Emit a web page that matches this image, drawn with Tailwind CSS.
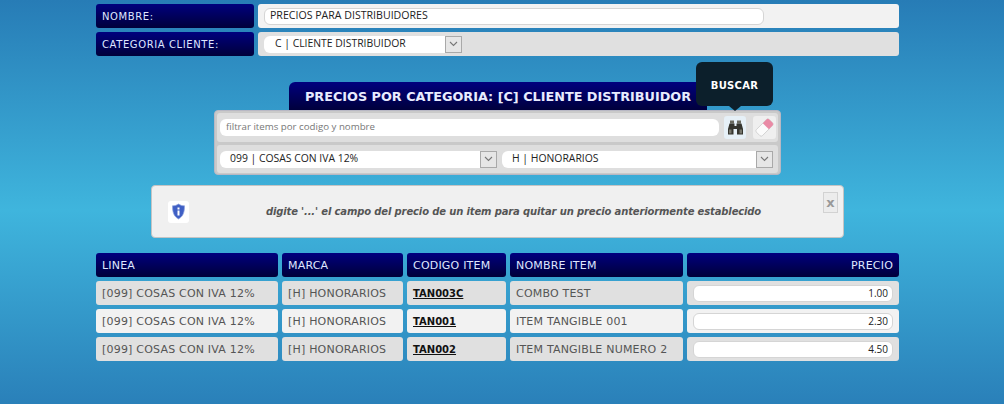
<!DOCTYPE html>
<html lang="es">
<head>
  <meta charset="UTF-8" />
  <title>Precios por categoria</title>
  <script src="https://cdn.jsdelivr.net/npm/@tailwindcss/browser@4"></script>
</head>
<body class="h-[404px] w-[1004px] overflow-hidden bg-[linear-gradient(180deg,#277cb6_0%,#3fb5dd_52%,#2a80b9_100%)] font-['DejaVu_Sans',sans-serif]">
  <div class="ml-[96px] flex w-[803px] flex-col pt-1">

    <!-- CABECERA -->
    <div class="grid grid-cols-[158px_641px] gap-1">
      <div class="flex h-6 items-center rounded-[3px] bg-[linear-gradient(180deg,#00007e,#00003a)] pl-1.5 text-[10px] tracking-[0.6px] text-[#dfe6ff]">NOMBRE:</div>
      <div class="flex h-6 items-center rounded-[3px] bg-[#f2f2f2] pl-[6px]">
        <div class="flex h-[17px] w-[500px] items-center rounded-md border border-[#d5d5d5] bg-white pl-[5px] font-['Open_Sans',sans-serif] text-[10.6px] text-[#222]">PRECIOS PARA DISTRIBUIDORES</div>
      </div>
      <div class="flex h-6 items-center rounded-[3px] bg-[linear-gradient(180deg,#00007e,#00003a)] pl-1.5 text-[10px] tracking-[0.6px] text-[#dfe6ff]">CATEGORIA CLIENTE:</div>
      <div class="flex h-6 items-center rounded-[3px] bg-[#e0e0e0] pl-[6px]">
        <div class="flex h-[17px] w-[198px] items-center justify-between rounded-l-md bg-white pl-[11px] font-['Open_Sans',sans-serif] text-[10.4px] text-[#222]">
          <span>C | CLIENTE DISTRIBUIDOR</span>
          <span class="flex h-[17px] w-[17px] items-center justify-center border border-[#a9a9a9] bg-[#e6e6e6]">
            <svg width="9" height="6" viewBox="0 0 9 6"><path d="M1 1l3.500 3.500L8 1" fill="none" stroke="#777" stroke-width="1.1"/></svg>
          </span>
        </div>
      </div>
    </div>

    <!-- BUSCADOR -->
    <div class="relative ml-[118px] mt-[26px] w-[567px]">
      <div class="ml-[75px] flex h-[29px] w-[418px] items-center justify-center rounded-t-md bg-[linear-gradient(180deg,#00007e,#00003a)] text-[12.8px] font-bold text-[#e8ecff]">PRECIOS POR CATEGORIA: [C] CLIENTE DISTRIBUIDOR</div>

      <div class="-mt-px flex flex-col gap-[3px] rounded-[4px] border border-[#b8b8c4] bg-[#c9c9c9] px-0.5 pb-px pt-0.5">
        <div class="flex h-[29px] items-center rounded-[3px] bg-[#dedede] pl-[3px]">
          <div class="flex h-[17px] w-[499px] items-center rounded-md bg-white pl-[6px] font-['Open_Sans',sans-serif] text-[9.7px] text-[#777]">filtrar items por codigo y nombre</div>
          <div class="ml-[5px] flex h-[23px] w-[22px] items-center justify-center rounded-[3px] bg-[#e6f0f7]">
            <svg width="17" height="17" viewBox="0 0 17 17">
              <path d="M3 1.500h4v3H3zM10 1.500h4v3h-4z" fill="#6a6a60"/>
              <path d="M2.500 4.500h5v2.500h2V4.500h5l1.500 5.500v5.500h-6V10h-3.500v5.500H1V10z" fill="#35352f"/>
              <path d="M2 10.500h2.500v4H2zM12.500 10.500H15v4h-2.500z" fill="#77776d"/>
            </svg>
          </div>
          <div class="ml-[7px] flex h-[23px] w-[23px] items-center justify-center rounded-[3px] bg-[#efefef]">
            <svg width="19" height="19" viewBox="0 0 20 20">
              <g transform="rotate(45 10 10)">
                <rect x="5.500" y="0.500" width="9" height="19" rx="2" fill="#fbfbfb" stroke="#c4c4c4" stroke-width=".7"/>
                <path d="M5.500 8V2.500a2 2 0 0 1 2-2h5a2 2 0 0 1 2 2V8z" fill="#e98aa5"/>
              </g>
            </svg>
          </div>
        </div>
        <div class="flex h-[28px] items-center gap-[5px] rounded-[3px] bg-[#dedede] pl-[3px] font-['Open_Sans',sans-serif] text-[10.4px] text-[#222]">
          <div class="flex h-[17px] w-[277px] items-center justify-between rounded-l-md bg-white pl-[10px]">
            <span>099 | COSAS CON IVA 12%</span>
            <span class="flex h-[17px] w-[17px] items-center justify-center border border-[#a9a9a9] bg-[#e6e6e6]">
              <svg width="9" height="6" viewBox="0 0 9 6"><path d="M1 1l3.500 3.500L8 1" fill="none" stroke="#777" stroke-width="1.1"/></svg>
            </span>
          </div>
          <div class="flex h-[17px] w-[271px] items-center justify-between rounded-l-md bg-white pl-[10px]">
            <span>H | HONORARIOS</span>
            <span class="flex h-[17px] w-[17px] items-center justify-center border border-[#a9a9a9] bg-[#e6e6e6]">
              <svg width="9" height="6" viewBox="0 0 9 6"><path d="M1 1l3.500 3.500L8 1" fill="none" stroke="#777" stroke-width="1.1"/></svg>
            </span>
          </div>
        </div>
      </div>

      <!-- tooltip -->
      <div class="absolute left-[482px] top-[-20px] flex h-[44px] w-[77px] items-center justify-center rounded-md bg-[#0c1f2b] pt-[2px] text-[10px] font-bold tracking-[0.3px] text-white">BUSCAR
        <span class="absolute bottom-[-5px] left-[33px] h-0 w-0 border-x-[6px] border-t-[5px] border-x-transparent border-t-[#0c1f2b]"></span>
      </div>
    </div>

    <!-- AVISO -->
    <div class="relative ml-[55px] mt-[10px] flex h-[53px] w-[693px] items-center rounded-[4px] border border-[#c4c4c4] bg-[#f0f0f0]">
      <div class="ml-4 flex h-[22px] w-[21px] items-center justify-center rounded-[3px] bg-white">
        <svg width="15" height="17" viewBox="0 0 15 17"><path d="M7.500 1c2 1.400 4 1.800 6 1.800 0 6-1 10.500-6 13.200C2.500 13.300 1.500 8.800 1.500 2.800c2 0 4-.4 6-1.800z" fill="#3f5fc4" stroke="#8ea2de" stroke-width=".7"/><path d="M6.500 4.500h2v2h-2zM6.500 7.500h2v5h-2z" fill="#fff"/></svg>
      </div>
      <div class="flex-1 pl-[3px] pr-[8px] text-center text-[10px] font-bold italic tracking-[-0.14px] text-[#555]">digite '...' el campo del precio de un item para quitar un precio anteriormente establecido</div>
      <div class="absolute right-[5px] top-[6px] flex h-[21px] w-[15px] items-center justify-center border border-[#d2d2d2] bg-[#ececec] text-[13px] font-bold text-[#999]">x</div>
    </div>

    <!-- TABLA -->
    <div class="mt-[15px] grid grid-cols-[182px_121px_99px_173px_212px] gap-1 text-[11px] tracking-[0.2px] text-[#555]">
      <div class="flex h-6 items-center rounded-[3px] bg-[linear-gradient(180deg,#00007e,#00003a)] pl-1.5 pt-[2px] text-[#dfe6ff]">LINEA</div>
      <div class="flex h-6 items-center rounded-[3px] bg-[linear-gradient(180deg,#00007e,#00003a)] pl-1.5 pt-[2px] text-[#dfe6ff]">MARCA</div>
      <div class="flex h-6 items-center rounded-[3px] bg-[linear-gradient(180deg,#00007e,#00003a)] pl-1.5 pt-[2px] text-[#dfe6ff]">CODIGO ITEM</div>
      <div class="flex h-6 items-center rounded-[3px] bg-[linear-gradient(180deg,#00007e,#00003a)] pl-1.5 pt-[2px] text-[#dfe6ff]">NOMBRE ITEM</div>
      <div class="flex h-6 items-center justify-end rounded-[3px] bg-[linear-gradient(180deg,#00007e,#00003a)] pr-1.5 pt-[2px] text-[#dfe6ff]">PRECIO</div>

      <div class="flex h-6 items-center rounded-[3px] bg-[#e0e0e0] pl-1.5 pt-[2px]">[099] COSAS CON IVA 12%</div>
      <div class="flex h-6 items-center rounded-[3px] bg-[#e0e0e0] pl-1.5 pt-[2px]">[H] HONORARIOS</div>
      <div class="flex h-6 items-center rounded-[3px] bg-[#e0e0e0] pl-1.5 text-[10px] font-bold tracking-normal text-[#111] underline">TAN003C</div>
      <div class="flex h-6 items-center rounded-[3px] bg-[#e0e0e0] pl-1.5 pt-[2px]">COMBO TEST</div>
      <div class="flex h-6 items-center rounded-[3px] bg-[#e0e0e0] px-1.5"><div class="flex h-[17px] w-full items-center justify-end rounded-md border border-[#d5d5d5] bg-white pr-1 font-['Open_Sans',sans-serif] text-[10px] tracking-normal text-[#222]">1.00</div></div>

      <div class="flex h-6 items-center rounded-[3px] bg-[#f2f2f2] pl-1.5 pt-[2px]">[099] COSAS CON IVA 12%</div>
      <div class="flex h-6 items-center rounded-[3px] bg-[#f2f2f2] pl-1.5 pt-[2px]">[H] HONORARIOS</div>
      <div class="flex h-6 items-center rounded-[3px] bg-[#f2f2f2] pl-1.5 text-[10px] font-bold tracking-normal text-[#111] underline">TAN001</div>
      <div class="flex h-6 items-center rounded-[3px] bg-[#f2f2f2] pl-1.5 pt-[2px]">ITEM TANGIBLE 001</div>
      <div class="flex h-6 items-center rounded-[3px] bg-[#f2f2f2] px-1.5"><div class="flex h-[17px] w-full items-center justify-end rounded-md border border-[#d5d5d5] bg-white pr-1 font-['Open_Sans',sans-serif] text-[10px] tracking-normal text-[#222]">2.30</div></div>

      <div class="flex h-6 items-center rounded-[3px] bg-[#e0e0e0] pl-1.5 pt-[2px]">[099] COSAS CON IVA 12%</div>
      <div class="flex h-6 items-center rounded-[3px] bg-[#e0e0e0] pl-1.5 pt-[2px]">[H] HONORARIOS</div>
      <div class="flex h-6 items-center rounded-[3px] bg-[#e0e0e0] pl-1.5 text-[10px] font-bold tracking-normal text-[#111] underline">TAN002</div>
      <div class="flex h-6 items-center rounded-[3px] bg-[#e0e0e0] pl-1.5 pt-[2px]">ITEM TANGIBLE NUMERO 2</div>
      <div class="flex h-6 items-center rounded-[3px] bg-[#e0e0e0] px-1.5"><div class="flex h-[17px] w-full items-center justify-end rounded-md border border-[#d5d5d5] bg-white pr-1 font-['Open_Sans',sans-serif] text-[10px] tracking-normal text-[#222]">4.50</div></div>
    </div>
  </div>
</body>
</html>
